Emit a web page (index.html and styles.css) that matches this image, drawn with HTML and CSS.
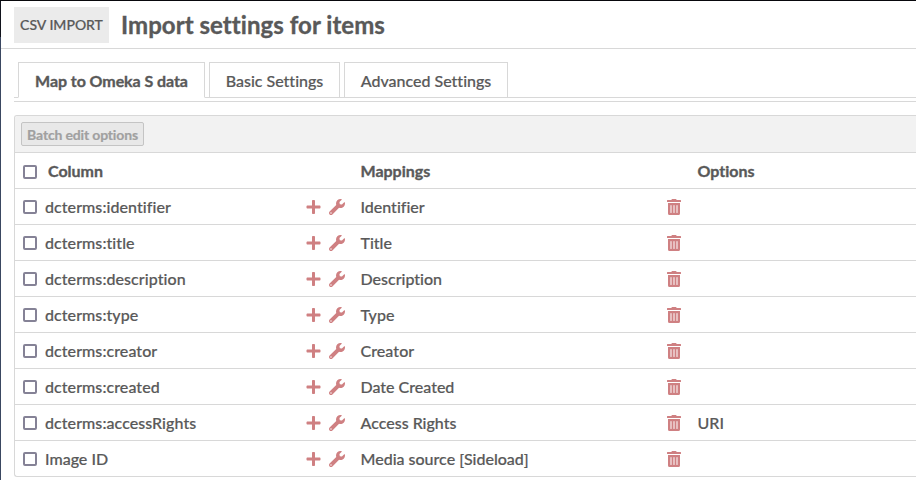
FILE: index.html
```html
<!DOCTYPE html>
<html lang="en">
<head>
<meta charset="utf-8">
<title>Import settings for items</title>
<link rel="stylesheet" href="styles.css">
</head>
<body>
<svg class="defs" aria-hidden="true">
<symbol id="plus" viewBox="0 0 448 512"><path d="M416 208H272V64c0-17.67-14.33-32-32-32h-32c-17.67 0-32 14.33-32 32v144H32c-17.67 0-32 14.33-32 32v32c0 17.67 14.33 32 32 32h144v144c0 17.67 14.33 32 32 32h32c17.67 0 32-14.33 32-32V304h144c17.67 0 32-14.33 32-32v-32c0-17.67-14.33-32-32-32z"/></symbol>
<symbol id="wrench" viewBox="0 0 512 512"><path fill-rule="evenodd" d="M507.73 109.1c-2.24-9.03-13.54-12.09-20.12-5.51l-74.36 74.36-67.88-11.31-11.31-67.88 74.36-74.36c6.62-6.62 3.43-17.9-5.66-20.16-47.38-11.74-99.55.91-136.58 37.93-39.64 39.64-50.55 97.1-34.05 147.2L18.74 402.76c-24.99 24.99-24.99 65.51 0 90.5 24.99 24.99 65.51 24.99 90.5 0l213.21-213.21c50.12 16.71 107.47 5.68 147.37-34.22 37.07-37.07 49.7-89.32 37.91-136.73zM64 472c-13.25 0-24-10.75-24-24 0-13.26 10.75-24 24-24s24 10.74 24 24c0 13.25-10.75 24-24 24z"/></symbol>
<symbol id="trash" viewBox="0 0 448 512"><path fill-rule="evenodd" d="M32 464a48 48 0 0 0 48 48h288a48 48 0 0 0 48-48V128H32zm272-256a16 16 0 0 1 32 0v224a16 16 0 0 1-32 0zm-96 0a16 16 0 0 1 32 0v224a16 16 0 0 1-32 0zm-96 0a16 16 0 0 1 32 0v224a16 16 0 0 1-32 0zM432 32H312l-9.4-18.7A24 24 0 0 0 281.1 0H166.8a23.72 23.72 0 0 0-21.4 13.3L136 32H16A16 16 0 0 0 0 48v32a16 16 0 0 0 16 16h416a16 16 0 0 0 16-16V48a16 16 0 0 0-16-16z"/></symbol>
</svg>
<div class="app">
<div class="rail"></div>
<main>
<header><span class="badge">CSV IMPORT</span><h1>Import settings for items</h1></header>
<nav class="tabs"><a class="tab active">Map to Omeka S data</a><a class="tab basic">Basic Settings</a><a class="tab advanced">Advanced Settings</a></nav>
<section class="panel">
<div class="batch"><button disabled>Batch edit options</button></div>
<div class="row head"><i class="check"></i><span>Column</span><span></span><span>Mappings</span><span></span><span>Options</span></div>
<div class="row"><i class="check"></i><span class="term">dcterms:identifier</span><span class="actions"><svg class="plus"><use href="#plus"/></svg><svg class="wrench"><use href="#wrench"/></svg></span><span>Identifier</span><svg class="trash"><use href="#trash"/></svg><span></span></div>
<div class="row"><i class="check"></i><span class="term">dcterms:title</span><span class="actions"><svg class="plus"><use href="#plus"/></svg><svg class="wrench"><use href="#wrench"/></svg></span><span>Title</span><svg class="trash"><use href="#trash"/></svg><span></span></div>
<div class="row"><i class="check"></i><span class="term">dcterms:description</span><span class="actions"><svg class="plus"><use href="#plus"/></svg><svg class="wrench"><use href="#wrench"/></svg></span><span>Description</span><svg class="trash"><use href="#trash"/></svg><span></span></div>
<div class="row"><i class="check"></i><span class="term">dcterms:type</span><span class="actions"><svg class="plus"><use href="#plus"/></svg><svg class="wrench"><use href="#wrench"/></svg></span><span>Type</span><svg class="trash"><use href="#trash"/></svg><span></span></div>
<div class="row"><i class="check"></i><span class="term">dcterms:creator</span><span class="actions"><svg class="plus"><use href="#plus"/></svg><svg class="wrench"><use href="#wrench"/></svg></span><span class="term">Creator</span><svg class="trash"><use href="#trash"/></svg><span></span></div>
<div class="row"><i class="check"></i><span class="term">dcterms:created</span><span class="actions"><svg class="plus"><use href="#plus"/></svg><svg class="wrench"><use href="#wrench"/></svg></span><span>Date Created</span><svg class="trash"><use href="#trash"/></svg><span></span></div>
<div class="row"><i class="check"></i><span class="term">dcterms:accessRights</span><span class="actions"><svg class="plus"><use href="#plus"/></svg><svg class="wrench"><use href="#wrench"/></svg></span><span>Access Rights</span><svg class="trash"><use href="#trash"/></svg><span>URI</span></div>
<div class="row"><i class="check"></i><span>Image ID</span><span class="actions"><svg class="plus"><use href="#plus"/></svg><svg class="wrench"><use href="#wrench"/></svg></span><span>Media source [Sideload]</span><svg class="trash"><use href="#trash"/></svg><span></span></div>
</section>
</main>
</div>
</body>
</html>
```
FILE: styles.css
```css
* { box-sizing: border-box; }
body { margin: 0; background: #fff; color: #595959; font: 500 16px/24px Lato, sans-serif; font-variant-ligatures: none; -webkit-text-stroke: 0.2px; overflow: hidden; }
.defs { display: none; }
.app { display: flex; height: 480px; border-top: 1px solid #08080c; }
.rail { flex: 0 0 1px; background: linear-gradient(#11131c 36px, #3a4761 36px); }
main { flex: 1; min-width: 0; }
header { height: 48px; display: flex; align-items: center; padding-left: 13px; border-bottom: 1px solid #d8d8d8; }
.badge { width: 95px; height: 36px; margin-top: 1px; background: #ebebeb; font-size: 14px; line-height: 36px; text-align: center; white-space: nowrap; }
h1 { margin: 0 0 0 12px; font-size: 24px; line-height: 36px; font-weight: 700; letter-spacing: 0.05px; white-space: nowrap; -webkit-text-stroke: 0.35px; }
.tabs { display: flex; gap: 4px; height: 40px; margin: 13px 0 13px 13px; padding-left: 4px; border-bottom: 1px solid #d8d8d8; background: linear-gradient(#d8d8d8, #d8d8d8) 0 35px / 100% 1px no-repeat; }
.tab { height: 36px; border: 1px solid #d8d8d8; background: #fff; line-height: 36px; text-align: center; white-space: nowrap; }
.active { width: 187px; border-bottom-color: #fff; font-weight: 700; letter-spacing: -0.07px; -webkit-text-stroke: 0.35px; }
.basic { width: 131px; }
.advanced { width: 164px; }
.panel { margin-left: 13px; border: 1px solid #d8d8d8; border-right: 0; border-radius: 3px 0 0 3px; overflow: hidden; }
.batch { height: 36px; padding: 6px 0 0 6px; background: #f2f2f2; }
button { display: block; width: 123px; height: 24px; padding: 1px 0 0; border: 1px solid #c4c4c4; border-radius: 2px; background: #e8e8e8; color: #a0a0a0; font: 700 14px/22px Lato, sans-serif; letter-spacing: -0.16px; white-space: nowrap; }
.row { display: grid; grid-template-columns: 22px 261px 54.5px 306.5px 30.5px 1fr; align-items: center; height: 36px; padding: 1px 0 0 8px; border-top: 1px solid #d8d8d8; white-space: nowrap; }
.head { font-weight: 700; line-height: 22px; -webkit-text-stroke: 0.35px; }
.head span { padding-bottom: 1px; }
.head .check { margin-top: 2px; }
.head span:nth-child(2) { padding-left: 3px; }
.term { letter-spacing: 0.07px; }
.check { width: 14px; height: 14px; border: 2px solid #858296; border-radius: 2px; background: #fff; }
.actions { display: flex; align-items: center; gap: 8px; }
svg { display: block; fill: #cf8082; }
.plus { width: 15px; height: 16px; }
.wrench { width: 16px; height: 16px; }
.trash { width: 14px; height: 16px; }
```
